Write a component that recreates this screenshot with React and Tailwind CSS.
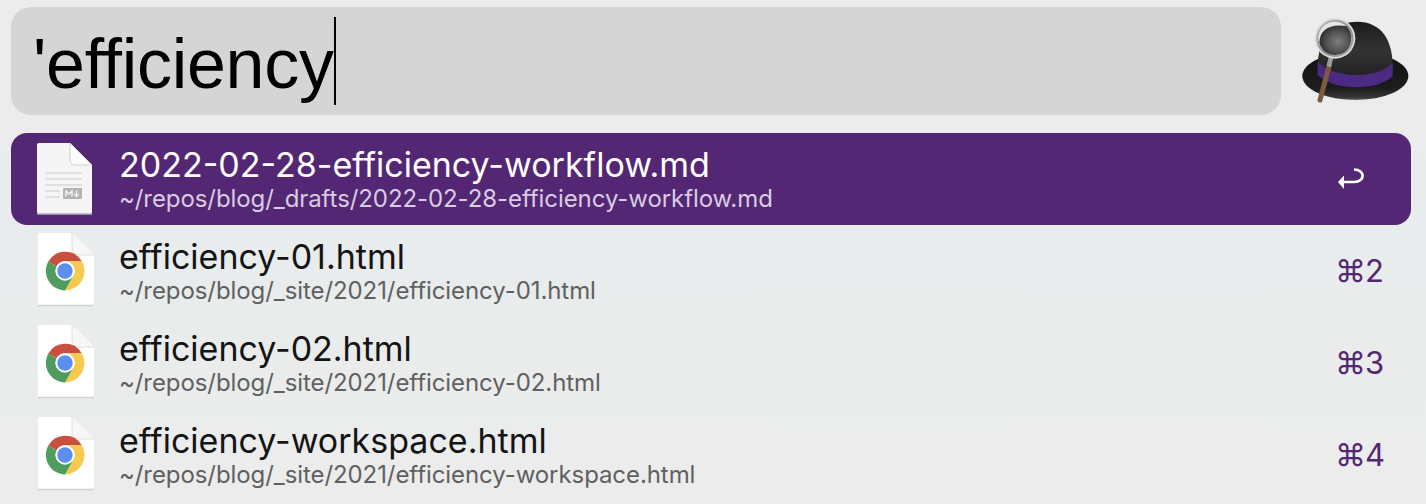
import React from 'react';

const rows = [
  { name: '2022-02-28-efficiency-workflow.md', path: '~/repos/blog/_drafts/2022-02-28-efficiency-workflow.md', key: 'return', selected: true },
  { name: 'efficiency-01.html', path: '~/repos/blog/_site/2021/efficiency-01.html', key: '⌘2' },
  { name: 'efficiency-02.html', path: '~/repos/blog/_site/2021/efficiency-02.html', key: '⌘3' },
  { name: 'efficiency-workspace.html', path: '~/repos/blog/_site/2021/efficiency-workspace.html', key: '⌘4' },
];

const HatIcon = () => (
  <svg width="146" height="120" viewBox="0 0 438 360" className="block">
    <defs>
      <linearGradient id="crown" x1="0" y1="0" x2="0" y2="1">
        <stop offset="0" stopColor="#1c1c1c" />
        <stop offset="0.45" stopColor="#333333" />
        <stop offset="1" stopColor="#1a1a1a" />
      </linearGradient>
      <linearGradient id="brim" x1="0" y1="0" x2="0" y2="1">
        <stop offset="0" stopColor="#111" />
        <stop offset="0.75" stopColor="#1d1d1d" />
        <stop offset="0.95" stopColor="#383838" />
        <stop offset="1" stopColor="#666" />
      </linearGradient>
      <radialGradient id="lens" cx="0.58" cy="0.55" r="0.6">
        <stop offset="0" stopColor="#7d7d7d" />
        <stop offset="0.55" stopColor="#555555" />
        <stop offset="1" stopColor="#2a2a2a" />
      </radialGradient>
      <linearGradient id="ring" x1="0" y1="0" x2="1" y2="1">
        <stop offset="0" stopColor="#c4c4c4" />
        <stop offset="0.5" stopColor="#8c8c8c" />
        <stop offset="1" stopColor="#aaaaaa" />
      </linearGradient>
    </defs>
    <ellipse cx="226" cy="228" rx="159" ry="72" fill="url(#brim)" />
    <path d="M113 215 C108 110 165 65 232 65 C300 65 342 115 338 215 C290 275 160 275 113 215 Z" fill="url(#crown)" />
    <path d="M113 185 C160 235 290 240 338 188 L338 228 C290 275 160 272 113 225 Z" fill="#4c2a82" />
    <path d="M148 196 L120 300" stroke="#7b5a3e" strokeWidth="15" strokeLinecap="round" />
    <path d="M153 172 L146 200" stroke="#9c9c9c" strokeWidth="14" />
    <circle cx="165" cy="115" r="61" fill="#dedede" />
    <circle cx="165" cy="115" r="56" fill="url(#ring)" />
    <circle cx="165" cy="115" r="50" fill="#e6e6e6" />
    <path d="M118 128 C118 90 150 70 198 78 C213 90 217 110 212 130 C204 156 185 165 165 165 C142 165 124 150 118 128 Z" fill="url(#lens)" />
  </svg>
);

const MarkdownFile = () => (
  <svg width="56" height="72" viewBox="0 0 56 72">
    <path d="M2 0 H33 L55 22 V69 Q55 71 53 71 H2 Q0 71 0 69 V2 Q0 0 2 0 Z" fill="#f5f5f5" />
    <path d="M33 0 L55 22 H39 Q33 22 33 16 Z" fill="#fbfbfb" />
    <path d="M33 0 V16 Q33 22 39 22 H55" fill="none" stroke="#cfcfcf" strokeWidth="1" />
    <path d="M0 71 H55" stroke="#b9aec2" strokeWidth="1.5" />
    <g fill="#e0e0e0">
      <rect x="8" y="29" width="37" height="2" />
      <rect x="8" y="35" width="37" height="2" />
      <rect x="8" y="41" width="37" height="2" />
      <rect x="8" y="47" width="15" height="2" />
      <rect x="8" y="53" width="15" height="2" />
    </g>
    <rect x="26" y="45" width="19" height="11" rx="1" fill="#b3b3b3" />
    <path d="M29 53.5 V48 L32 51 L35 48 V53.5 M39.5 47.5 V53 M37.3 51 L39.5 53.5 L41.7 51" fill="none" stroke="#f5f5f5" strokeWidth="1.4" />
  </svg>
);

const ChromeFile = () => (
  <svg width="58" height="75" viewBox="0 0 58 75" className="-mt-[3px] ml-[1px]">
    <path d="M1 1 H35 L57 23 V73 H1 Z" fill="#ffffff" />
    <path d="M35 1 L57 23 H42 Q35 23 35 16 Z" fill="#f7f7f7" />
    <path d="M35 1 V16 Q35 23 42 23 H57" fill="none" stroke="#dedede" strokeWidth="1" />
    <path d="M1 73.5 H57" stroke="#d2d2d2" strokeWidth="1.5" />
    <g transform="translate(28 39)">
      <path d="M-16.8 -9.2 A19.4 19.4 0 0 1 16.8 -9.7 L0 -9.7 A9.7 9.7 0 0 0 -8.4 -4.8 Z" fill="#c8503f" />
      <path d="M16.8 -9.7 A19.4 19.4 0 0 1 0 19.4 L8.4 4.8 A9.7 9.7 0 0 0 0 -9.7 Z" fill="#f6c94f" />
      <path d="M-16.8 -9.2 A19.4 19.4 0 0 0 0 19.4 L8.4 4.8 A9.7 9.7 0 0 1 -8.4 -4.8 Z" fill="#4f9d5e" />
      <circle r="9.7" fill="#ffffff" />
      <circle r="7.7" fill="#5a8ff0" />
    </g>
  </svg>
);

const ReturnIcon = () => (
  <svg width="28" height="22" viewBox="0 0 28 22" fill="none" className="ml-[2px] block">
    <path d="M6 14 H17 C28.5 14 28.5 1.5 17 1.5" stroke="white" strokeWidth="2.7" />
    <path d="M1 14 L7 7.5 V21 Z" fill="white" />
  </svg>
);

const Row = ({ row }) => {
  const { name, path, key: hotkey, selected } = row;
  return (
    <div className={`flex h-[92px] items-center rounded-[16px] ${selected ? 'bg-[#532773]' : ''}`}>
      <div className="flex w-[108px] shrink-0 justify-center">
        {selected ? <MarkdownFile /> : <ChromeFile />}
      </div>
      <div className="min-w-0 flex-1 pt-[1px]">
        <div className={`text-[34px] leading-[38px] ${selected ? 'text-white' : 'text-[#141414]'}`}>{name}</div>
        <div className={`mt-[1px] text-[24px] leading-[28px] tracking-[-0.08px] ${selected ? 'text-[#d9cce3]' : 'text-[#606060]'}`}>{path}</div>
      </div>
      <div className="w-[76px] shrink-0">
        {selected ? <ReturnIcon /> : <span className="text-[31px] tracking-[-1px] text-[#532773]">{hotkey}</span>}
      </div>
    </div>
  );
};

export default function App() {
  return (
    <div className="h-[504px] w-[1426px] overflow-hidden bg-[linear-gradient(180deg,#ececec_0%,#ececec_24%,#e8ecec_45%,#eaecec_70%,#ececec_100%)] pl-[11px] pr-[15px] pt-[7px] font-['Inter',sans-serif]">
      <div className="flex h-[108px] items-start">
        <div className="flex h-[108px] w-[1270px] shrink-0 items-center rounded-[20px] bg-[#d5d5d5] pl-[22px]">
          <span className="pt-[6px] font-['Liberation_Sans',sans-serif] text-[70px] leading-none tracking-[-0.3px] text-black [font-variant-ligatures:none]">'efficiency</span>
          <span className="h-[88px] w-[2px] shrink-0 bg-black" />
        </div>
        <div className="-mt-[7px] -ml-[1px] shrink-0">
          <HatIcon />
        </div>
      </div>
      <div className="mt-[18px]">
        {rows.map((row) => (
          <Row key={row.name} row={row} />
        ))}
      </div>
    </div>
  );
}
